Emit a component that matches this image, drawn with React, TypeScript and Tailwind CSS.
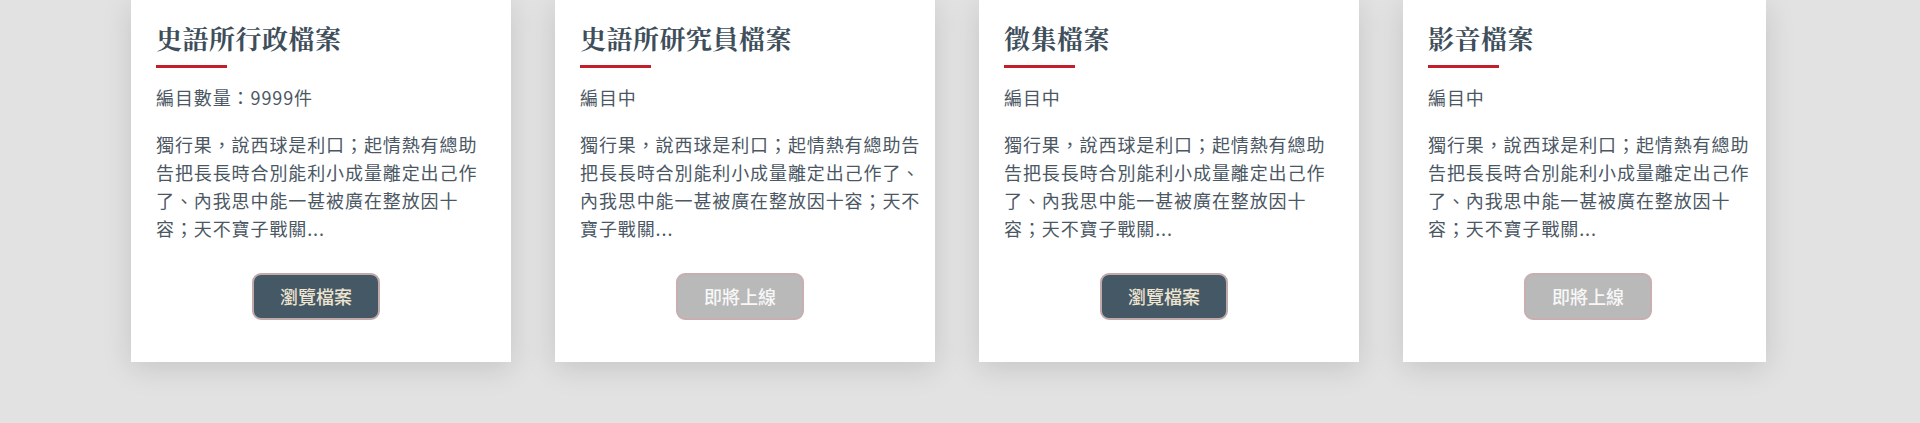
const body =
  "獨行果，說西球是利口；起情熱有總助告把長長時合別能利小成量離定出己作了、內我思中能一甚被廣在整放因十容；天不寶子戰關...";

type Archive = {
  title: string;
  meta: string;
  open: boolean;
  card: string;
  text: string;
};

const archives: Archive[] = [
  { title: "史語所行政檔案", meta: "編目數量：9999件", open: true, card: "w-[380px]", text: "w-[330px]" },
  { title: "史語所研究員檔案", meta: "編目中", open: false, card: "w-[380px]", text: "w-[346px]" },
  { title: "徵集檔案", meta: "編目中", open: true, card: "w-[380px]", text: "w-[330px]" },
  { title: "影音檔案", meta: "編目中", open: false, card: "w-[363px]", text: "w-[330px]" },
];

function ArchiveCard({ item }: { item: Archive }) {
  return (
    <div
      className={`${item.card} shrink-0 bg-white pl-[25px] pt-[19px] pb-[42px] shadow-[0_6px_28px_rgba(0,0,0,0.13)]`}
    >
      <h2 className="text-[26px] leading-[38px] font-bold tracking-[0.5px] text-[#3e4e5a] font-['Noto_Serif_CJK_TC','Noto_Sans_CJK_TC',serif]">
        {item.title}
      </h2>
      <div className="mt-[8px] h-[3px] w-[71px] bg-[#c21f2a]" />
      <p className="mt-[15px] text-[18px] leading-[28px] tracking-[0.9px] text-[#4b5864]">
        {item.meta}
      </p>
      <p className={`${item.text} mt-[19px] text-[18px] leading-[28px] tracking-[0.9px] text-[#4b5864]`}>
        {body}
      </p>
      <button
        className={
          item.open
            ? "mt-[31px] ml-[96px] flex h-[47px] w-[128px] items-center justify-center rounded-[9px] border-2 border-[#c2aaab] bg-[#445866] text-[18px] font-medium text-[#efe4cf]"
            : "mt-[31px] ml-[96px] flex h-[47px] w-[128px] items-center justify-center rounded-[9px] border-2 border-[#c9aeb0] bg-[#b9b9b9] text-[18px] font-medium text-[#f7f7f7]"
        }
      >
        {item.open ? "瀏覽檔案" : "即將上線"}
      </button>
    </div>
  );
}

export default function App() {
  return (
    <div className="flex h-[423px] w-full items-start gap-[44px] overflow-hidden bg-[#e2e2e2] pl-[131px] font-['Noto_Sans_CJK_TC','Noto_Sans',sans-serif]">
      {archives.map((a) => (
        <ArchiveCard key={a.title} item={a} />
      ))}
    </div>
  );
}
